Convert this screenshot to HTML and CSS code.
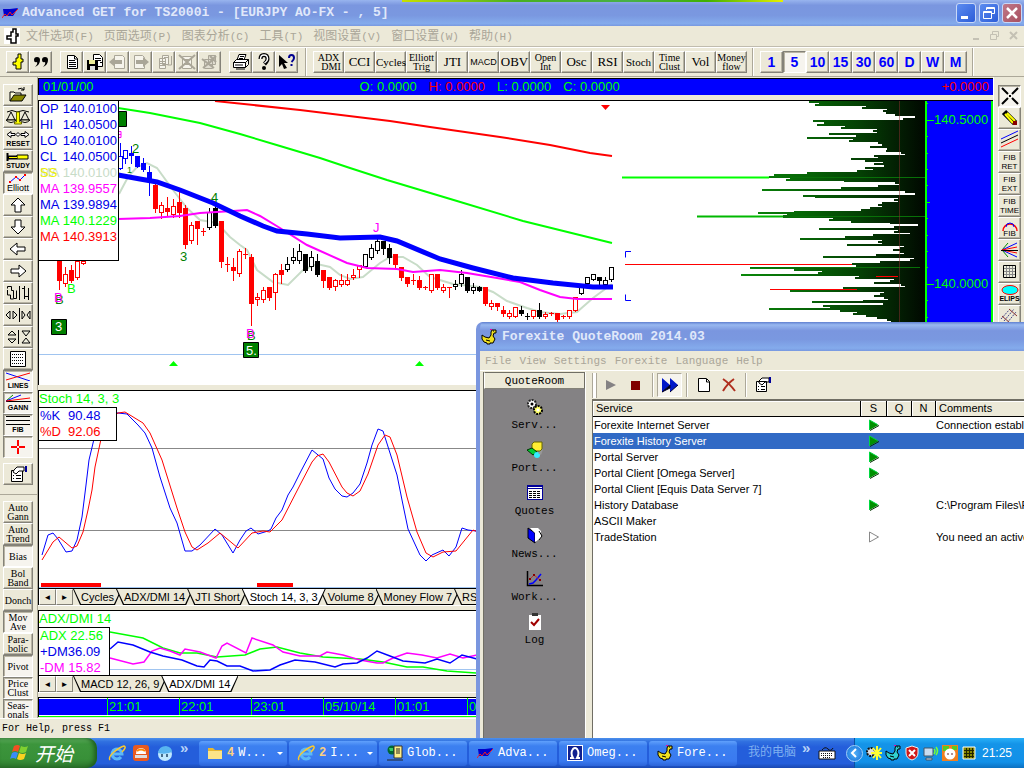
FILE: index.html
```html
<!DOCTYPE html>
<html lang="zh-CN">
<head>
<meta charset="utf-8">
<title>Advanced GET for TS2000i</title>
<link rel="stylesheet" href="styles.css">
</head>
<body>
<div class="desktop">
  <div class="top-strip"></div>
  <header class="titlebar">
    <svg class="app-icon" width="17" height="12"><path d="M1 2h7l8-1-5 8H2z" fill="#00c"/><path d="M0 11l3-4 2 2 3-4 2 3 6-6" fill="none" stroke="#f02020"/></svg>
    <h1 class="title">Advanced GET for TS2000i - [EURJPY AO-FX - , 5]</h1>
    <div class="win-buttons">
      <button class="win-btn" aria-label="Minimize"><svg width="16" height="16"><path d="M3 11h7v3H3z" fill="#fff"/></svg></button>
      <button class="win-btn" aria-label="Restore"><svg width="16" height="16"><path d="M5.500 5V2.500h8v6H11M2.500 6.500h8v7h-8zM3 7.500h7M6 3.500h7" fill="none" stroke="#fff"/></svg></button>
      <button class="win-btn close" aria-label="Close"><svg width="16" height="16"><path d="M3 3l10 10M13 3L3 13" stroke="#fff" stroke-width="2.500"/></svg></button>
    </div>
  </header>

  <nav class="menubar">
    <span class="doc-icon"><svg width="16" height="16"><path d="M9 1h3v5h2v2h-2v7H7v-4H3V8h4V4h2z" fill="#fff" stroke="#000" stroke-width="1.500"/></svg></span>
    <button class="menu">文件选项<span class="key">(F)</span></button>
    <button class="menu">页面选项<span class="key">(P)</span></button>
    <button class="menu">图表分析<span class="key">(C)</span></button>
    <button class="menu">工具<span class="key">(T)</span></button>
    <button class="menu">视图设置<span class="key">(V)</span></button>
    <button class="menu">窗口设置<span class="key">(W)</span></button>
    <button class="menu">帮助<span class="key">(H)</span></button>
    <svg class="mdi" width="50" height="12"><path d="M3 9h6" stroke="#c4c1b4" stroke-width="2"/><path d="M22.500 4V1.500h6v5H26M20.500 4.500h6v5h-6z" fill="none" stroke="#c4c1b4"/><path d="M40 2l7 7M47 2l-7 7" stroke="#c4c1b4" stroke-width="2"/></svg>
  </nav>

  <div class="toolbars">
    <div class="bar">
      <button class="tb" aria-label="Chart"><svg width="18" height="18"><path d="M9 1h3v5h2v3h-2v7H7v-4H4V9h3V5h2z" fill="#ff0" stroke="#000"/></svg></button>
      <button class="tb" aria-label="Quotes"><svg width="18" height="18"><path d="M2 7a3 3 0 1 1 6 0q0 5-5 7 3-3 2-5-3 1-3-2zM10 7a3 3 0 1 1 6 0q0 5-5 7 3-3 2-5-3 1-3-2z"/></svg></button>
    </div>
    <div class="bar">
      <button class="tb" aria-label="New"><svg width="18" height="18"><path d="M4.500 2.500h7l3 3v10h-10z" fill="#fff" stroke="#000"/><path d="M11.500 3v3h3M6 7.500h6M6 9.500h7M6 11.500h7M6 13.500h7" fill="none" stroke="#000"/></svg></button>
      <button class="tb" aria-label="Save all"><svg width="18" height="18"><path d="M7.500 1.500h6l3 3v9h-9z" fill="#fff" stroke="#000"/><path d="M9 5.500h6M9 7.500h6M14 9.500h2" stroke="#000"/><path d="M1 7h11v10H1z"/><path d="M3 7h6v4H3z" fill="#ee9"/><path d="M4 13h5v4H4z" fill="#ddd"/></svg></button>
      <button class="tb" aria-label="Previous page"><svg width="18" height="18"><path d="M5.500 2.500h8l2 2v11h-10z" fill="#f6f4ec" stroke="#aaa698"/><path d="M0 9l6-5v3h7v4H6v3z" fill="#aaa698"/></svg></button>
      <button class="tb" aria-label="Next page"><svg width="18" height="18"><path d="M2.500 2.500h8l2 2v11h-10z" fill="#f6f4ec" stroke="#aaa698"/><path d="M17 9l-6-5v3H4v4h7v3z" fill="#aaa698"/></svg></button>
      <button class="tb" aria-label="Copy page"><svg width="18" height="18"><path d="M7.500 2.500h6v9h-6zM4.500 5.500h6v10h-6z" fill="#f6f4ec" stroke="#aaa698"/><path d="M5 8.500h5M5 10.500h5M5 12.500h5M9 4.500h4M16.500 3v9h-4" fill="none" stroke="#aaa698"/></svg></button>
      <button class="tb" aria-label="Delete page"><svg width="18" height="18"><path d="M4.500 3.500h9v12h-9z" fill="#f6f4ec" stroke="#aaa698"/><path d="M1 2l16 14M17 2L1 16M6 7h6M6 11h6" stroke="#aaa698" stroke-width="2"/></svg></button>
      <button class="tb" aria-label="Clear pages"><svg width="18" height="18"><path d="M7.500 2.500h7v9h-7zM3.500 6.500h8v9h-8z" fill="#e0ddd0" stroke="#aaa698"/><path d="M1 6l12 9M13 6L2 15M9 3l6 6M15 3L9 9" stroke="#aaa698" stroke-width="2"/></svg></button>
    </div>
    <div class="bar">
      <button class="tb" aria-label="Print"><svg width="18" height="18"><path d="M5 7l2-5.500h7L12 7M1.500 9.500l3-3h12l-3 3zM1.500 9.500v5h12v-5zM13.500 14.500l3-3v-5" fill="#fff" stroke="#000"/><path d="M3 12h8M4 16h9M8 3.500h4M7 5.500h4" stroke="#000"/></svg></button>
      <button class="tb" aria-label="Help"><svg width="18" height="18"><path d="M5.500 6q0-4 3.500-4t3.500 4q0 2-3 5" fill="none" stroke="#000" stroke-width="4"/><path d="M5.500 6q0-4 3.500-4t3.500 4q0 2-3 4" fill="none" stroke="#fff" stroke-width="1.500"/><circle cx="9" cy="15" r="2"/></svg></button>
      <button class="tb" aria-label="What's this"><svg width="18" height="18"><path d="M1 2v12l3-3 2 5 3-1-3-5h4z"/><path d="M11 5q0-3 2.500-3t2.500 3q0 2-2.500 4M13.500 11v2" fill="none" stroke="#000090" stroke-width="2"/></svg></button>
    </div>
    <div class="bar sep studies">
      <button class="tb st small">ADX<br>&nbsp; DMI</button><button class="tb st">CCI</button><button class="tb st mid">Cycles</button><button class="tb st small">Elliott<br>Trig</button><button class="tb st">JTI</button><button class="tb st sans">MACD</button><button class="tb st">OBV</button><button class="tb st small">Open<br>Int</button><button class="tb st">Osc</button><button class="tb st">RSI</button><button class="tb st mid">Stoch</button><button class="tb st small">Time<br>Clust</button><button class="tb st">Vol</button><button class="tb st small">Money<br>flow</button>
    </div>
    <div class="bar sep times">
      <button class="tb tm">1</button><button class="tb tm on">5</button><button class="tb tm">10</button><button class="tb tm">15</button><button class="tb tm">30</button><button class="tb tm">60</button><button class="tb tm">D</button><button class="tb tm">W</button><button class="tb tm">M</button>
    </div>
    <div class="bar sep"></div>
  </div>

  <main class="work">
    <aside class="left-tools">
      <button class="lt" aria-label="Open"><svg width="24" height="18"><path d="M4 15V6h4l1 1h6v2" fill="#ffd" stroke="#000"/><path d="M4 15l4-6h12l-4 6z" fill="#880" stroke="#000"/><path d="M12 3q4-2 6 1m0-3v3h-3" fill="none" stroke="#000"/></svg></button>
      <button class="lt" aria-label="Balance"><svg width="26" height="18"><path d="M2 4q5-3 10 0 6-3 12 0" fill="none" stroke="#000"/><path d="M6 4L2 12h8zM20 4l-4 8h8z" fill="none" stroke="#000"/><path d="M1 12h10q-5 5-10 0zM15 12h10q-5 5-10 0z" fill="#ffd" stroke="#000"/><path d="M11.500 4h3v10h2v2h-7v-2h2z" fill="#ff0" stroke="#660"/></svg></button>
      <button class="lt stack"><svg width="24" height="9"><path d="M1 4.500l4-3v2h4v2H5v2zM23 4.500l-4-3v2h-4v2h4v2z" fill="#fff" stroke="#000"/><path d="M10 4.500l2-2 2 2-2 2z" fill="#fff" stroke="#000"/></svg><span>RESET</span></button>
      <button class="lt stack"><svg width="24" height="8"><path d="M1.500 0v8M1 3.500h10M1 5.500h10" stroke="#000" stroke-width="2"/><path d="M11 2h11v4H11z" fill="#ff0" stroke="#000"/><path d="M3 4.500h8" stroke="#ff0"/></svg><span>STUDY</span></button>
      <button class="lt stack on"><svg width="24" height="9"><path d="M4 8l6-5 4 3 5-5" fill="none" stroke="#00f"/><path d="M3 7h2v2H3zM9 2h2v2H9zM13 5h2v2h-2zM18 0h2v2h-2z" fill="#f00"/></svg><span class="big">Elliott</span></button>
      <button class="lt" aria-label="Up"><svg width="20" height="18"><path d="M10 2l7 7h-4v7H7V9H3z" fill="#fff" stroke="#000"/></svg></button>
      <button class="lt" aria-label="Down"><svg width="20" height="18"><path d="M10 16l7-7h-4V2H7v7H3z" fill="#fff" stroke="#000"/></svg></button>
      <button class="lt" aria-label="Left"><svg width="20" height="18"><path d="M2 9l7-6v4h8v4H9v4z" fill="#fff" stroke="#000"/></svg></button>
      <button class="lt" aria-label="Right"><svg width="20" height="18"><path d="M18 9l-7-6v4H3v4h8v4z" fill="#fff" stroke="#000"/></svg></button>
      <button class="lt" aria-label="Bar width"><svg width="26" height="18"><path d="M2.500 4.500V2.500h4v4h2v8h3v-8M2.500 6v5h3v4h3M14.500 2v14M19.500 2v13M23.500 4v12M17 4.500h3M19 12.500h4" fill="none" stroke="#000"/></svg></button>
      <button class="lt" aria-label="Expand horizontally"><svg width="26" height="18"><path d="M5 5L1 9l4 4zM8 5l4 4-4 4zM17 5l3 4-3 4zM25 5l-3 4 3 4z" fill="#eed" stroke="#000"/><path d="M14.500 2v14" stroke="#000"/></svg></button>
      <button class="lt" aria-label="Expand vertically"><svg width="26" height="18"><path d="M3 7l4-4 4 4zM3 11l4 4 4-4zM17 3h8l-4 5zM17 15h8l-4-5z" fill="#eed" stroke="#000"/><path d="M13.500 2v14" stroke="#000"/></svg></button>
      <button class="lt" aria-label="Grid"><svg width="18" height="18"><path d="M1.500 1.500h15v15h-15z" fill="#fff" stroke="#000"/><path d="M3 4.500h12M3 7.500h12M3 10.500h12M3 13.500h12" stroke="#000" stroke-dasharray="1 1"/></svg></button>
      <button class="lt stack on"><svg width="26" height="9"><path d="M1 1l24 8" stroke="#00f"/><path d="M1 8l24-7" stroke="#f00"/></svg><span>LINES</span></button>
      <button class="lt stack on"><svg width="26" height="9"><path d="M1 7.500h25" stroke="#000"/><path d="M1 7l7-6" stroke="#080"/><path d="M1 7l15-6" stroke="#00f"/><path d="M1 7l24-3" stroke="#f00"/></svg><span>GANN</span></button>
      <button class="lt stack on"><svg width="26" height="9"><path d="M1 .5h24M1 4.500h24M1 8.500h24" stroke="#000"/></svg><span>FIB</span></button>
      <button class="lt on" aria-label="Crosshair"><svg width="18" height="18"><path d="M9 2v6M9 10v6M2 9h6M10 9h6" stroke="#f00" stroke-width="2"/></svg></button>
      <button class="lt gap-top" aria-label="Properties"><svg width="20" height="18"><path d="M3.500 5.500h11v11h-11z" fill="#fff" stroke="#000"/><path d="M5 10.500h1M8 10.500h5M5 13.500h1M8 13.500h5M6 5l3-3h7v4h-5l-3 3-3-2z" fill="#fff" stroke="#000"/><path d="M17 1h2v6h-2z" fill="#009"/></svg></button>
      <hr class="lt-sep">
      <button class="lt txt">Auto<br>Gann</button>
      <button class="lt txt">Auto<br>Trend</button>
      <button class="lt txt on">Bias</button>
      <button class="lt txt">Bol<br>Band</button>
      <button class="lt txt">Donch</button>
      <button class="lt txt on">Mov<br>Ave</button>
      <button class="lt txt">Para-<br>bolic</button>
      <button class="lt txt on">Pivot</button>
      <button class="lt txt on">Price<br>Clust</button>
      <button class="lt txt on">Seas-<br>onals</button>
    </aside>

    <section class="charts">
      <div class="quote-bar">
        <span>01/01/00</span>
        <div class="ohlc"><span>O: 0.0000</span><span class="red">H: 0.0000</span><span>L: 0.0000</span><span>C: 0.0000</span></div>
        <span class="red change">+0.0000</span>
      </div>

      <div class="pane price">
        <table class="legend">
          <tr class="blue"><th>OP</th><td>140.0100</td></tr>
          <tr class="blue"><th>HI</th><td>140.0500</td></tr>
          <tr class="blue"><th>LO</th><td>140.0100</td></tr>
          <tr class="blue"><th>CL</th><td>140.0500</td></tr>
          <tr class="pale"><th class="double">MA<span>SS</span></th><td>140.0100</td></tr>
          <tr class="magenta"><th>MA</th><td>139.9557</td></tr>
          <tr class="blue"><th>MA</th><td>139.9894</td></tr>
          <tr class="green"><th>MA</th><td>140.1229</td></tr>
          <tr class="red"><th>MA</th><td>140.3913</td></tr>
        </table>
        <svg class="plot" id="price-plot"><g transform="translate(-39 -101)">
          <path class="ln sky" d="M39 354.500H1024"/>
          <path class="ln w2" stroke="#c8dcc8" d="M119 194 128 177 137 167 147 163 157 168 173 190 187 208 200 220 217 223 230 237 240 245 247 250 257 270 273 282 288 285 303 270 317 264 330 267 340 275 350 279 363 277 380 263 390 257 403 257 417 265 430 277 453 284 480 287 493 292 507 301 527 308 540 312 560 314 577 312 593 298 612 284"/>
          <g id="candles"></g>
          <path class="ln w2 s-magenta" d="M118 219 150 218 180 216 200 213 233 211 247 210 260 216 280 228 307 245 347 263 367 268 397 269 413 272 440 270 467 273 497 278 520 282 540 290 560 297 577 299 612 299"/>
          <path class="ln w5 s-blue" d="M118 175 140 179 157 182 180 190 213 203 240 216 263 226 277 231 307 234 340 238 380 237 397 241 440 259 473 268 513 278 553 283 593 287 613 287"/>
          <path class="ln w2 s-green" d="M118 108 150 113 200 123 240 134 280 146 320 158 350 168 387 180 457 201 523 221 612 243"/>
          <path class="ln w2 s-red" d="M215 101 300 110 390 121 430 127 500 137 550 145 590 153 612 156"/>
          <path fill="#f00" d="M601 105h9l-4.500 5z"/>
          <path fill="#0f0" d="M169 366h9l-4.500-5zM415 366h9l-4.500-5z"/>
          <g class="tag"><path d="M51.500 319.500h15v15h-15zM243.500 342.500h15v15h-15zM111.500 111.500h15v15h-15z"/></g>
          <path d="M119 131.500h2v6h-2M119 134.500h2" fill="none" stroke="#f0f"/>
          <g class="wave"><text x="55" y="331" fill="#fff">3</text><text x="246" y="355" fill="#fff">5.</text><text x="132" y="153">2</text><text x="127" y="173" font-size="9">1</text><text x="211" y="202">4</text><text x="180" y="261">3</text><text x="373" y="232" fill="#f0f">J</text><text x="247" y="340">B</text><text x="246" y="338" fill="#f0f">B</text><text x="55" y="304">B</text><text x="54" y="302" fill="#f0f">B</text><text x="67" y="293" fill="#0f0">B</text></g>
        </g></svg>
        <svg class="profile" id="profile"><defs><linearGradient id="depth" gradientUnits="userSpaceOnUse" x1="740" x2="925" y1="0" y2="0"><stop offset="0" stop-color="#0a8a0a"/><stop offset=".4" stop-color="#066006"/><stop offset=".65" stop-color="#044004"/><stop offset=".82" stop-color="#032403"/><stop offset="1" stop-color="#010801"/></linearGradient></defs>
          <g transform="translate(-620 -101)"><path class="ln sky" d="M620 354.500h305"/><g id="profile-bars" fill="url(#depth)"></g>
          <path d="M622 177.500h147" stroke="#0f0" stroke-width="2"/><path d="M697 216.500h86" stroke="#00b800" stroke-width="2"/><path d="M769 177.500h156M783 216.500h142M750 267.500h170" stroke="#087008"/>
          <path class="ln s-red" d="M625 264.500h227M876 276.500h22M770 289.500h87"/><path d="M899.500 101v284" stroke="#8a3030" stroke-opacity=".5"/>
          <path class="ln s-blue" d="M631 251.500h-5.500v6M631 300.500h-5.500v-6"/></g></svg>
        <div class="axis"><svg width="7" height="285"><path d="M0 19.500h7M0 183.500h7M0 101.500h3M0 2.500h1M0 35.500h1M0 52.500h1M0 68.500h1M0 84.500h1M0 117.500h1M0 134.500h1M0 150.500h1M0 166.500h1M0 199.500h1M0 216.500h1" stroke="#0f0"/></svg>
          <div class="axis-labels"><span>140.5000</span><span>140.0000</span></div></div>
      </div>

      <div class="pane stoch">
        <div class="over"><p class="green">Stoch 14, 3, 3</p>
        <table class="legend k"><tr class="blue"><th>%K</th><td>90.48</td></tr><tr class="red"><th>%D</th><td>92.06</td></tr></table></div>
        <svg class="plot"><g transform="translate(-39 -391)">
          <path class="ln" stroke="#888" d="M39 448.500H1024M39 530.500H1024"/><path class="ln sky" d="M39 587.500H1024"/>
          <path fill="#f00" d="M41 583h60v4H41zM257 583h36v4h-36z"/>
          <path class="ln s-blue" d="M42 555 48 535 53 533 58 539 66 552 72 551 77 540 82 517 86 485 89 460 94 439 101 420 110 412 118 413 127 414 138 425 145 433 152 448 160 477 170 508 177 523 185 551 192 551 200 545 215 529 222 535 233 553 240 540 246 531 251 528 258 534 268 531 271 529 276 518 282 510 288 495 293 487 300 473 312 450 323 459 329 478 335 489 342 496 347 497 353 493 360 484 367 463 372 445 378 429 383 431 390 453 397 475 402 500 408 529 420 555 426 561 432 555 443 550 449 556 456 547 462 528 468 530 476 531"/>
          <path class="ln s-red" d="M42 560 53 542 59 537 72 548 77 546 83 532 88 510 92 490 95 467 101 439 108 420 118 413 125 412 143 423 150 433 162 460 177 508 185 532 192 547 197 550 208 543 220 533 238 548 252 533 263 531 270 532 282 520 300 485 312 462 317 456 323 454 329 462 342 487 347 493 353 496 360 491 368 474 378 445 385 435 390 437 397 455 407 497 417 532 426 553 433 557 443 552 456 551 473 530 478 532"/>
        </g></svg>
      </div>
      <div class="tabs"><button class="arrow" aria-label="Previous">◄</button><button class="arrow" aria-label="Next">►</button>
        <button class="tab">Cycles</button><button class="tab">ADX/DMI 14</button><button class="tab">JTI Short</button><button class="tab active">Stoch 14, 3, 3</button><button class="tab">Volume 8</button><button class="tab">Money Flow 7</button><button class="tab">RSI 5</button></div>

      <div class="pane adx">
        <div class="over"><p class="green">ADX/DMI 14</p>
        <ul class="legend a"><li class="green">ADX 22.56</li><li class="blue">+DM36.09</li><li class="magenta">-DM 15.82</li></ul></div>
        <svg class="plot"><g transform="translate(-39 -611)">
          <path class="ln sky" d="M39 669.500H1024"/>
          <path class="ln s-green" stroke-width="1.500" d="M110 632 143 638 163 648 180 653 197 653 217 657 245 655 260 649 277 647 300 653 323 657 360 659 383 662 407 667 423 667 447 671 476 673"/>
          <path class="ln s-magenta" stroke-width="1.500" d="M110 658 133 664 144 662 152 651 160 648 170 651 180 655 185 649 200 652 216 658 222 646 227 643 246 653 252 638 273 645 283 652 300 656 320 656 327 652 343 655 360 660 377 663 383 663 393 658 407 653 422 655 437 658 450 654 463 658 477 655"/>
          <path class="ln s-blue" stroke-width="1.500" d="M110 649 118 642 133 645 150 652 163 656 182 660 197 666 204 667 210 660 217 661 227 666 240 666 253 671 270 670 280 665 295 660 315 662 335 667 343 664 357 663 367 658 377 651 390 656 403 661 425 663 437 659 450 663 462 655 477 659"/>
        </g></svg>
      </div>
      <div class="tabs"><button class="arrow" aria-label="Previous">◄</button><button class="arrow" aria-label="Next">►</button>
        <button class="tab">MACD 12, 26, 9</button><button class="tab active">ADX/DMI 14</button></div>
      <div class="timeline"><span>21:01</span><span>22:01</span><span>23:01</span><span>05/10/14</span><span>01:01</span><span>02:01</span></div>
    </section>

    <aside class="right-tools">
      <button class="rt on" aria-label="Clear"><svg width="20" height="20"><path d="M2 2l6 6M12 12l6 6M18 2l-6 6M8 12l-6 6" stroke="#000" stroke-width="2"/><path d="M9 9h2v2H9z"/></svg></button>
      <button class="rt" aria-label="Pencil"><svg width="20" height="20"><path d="M4 4l11 11" stroke="#000" stroke-width="6"/><path d="M5 6l8 9M7 5l8 8" stroke="#ff0" stroke-width="2"/><path d="M13 13h4v4h-4z" fill="#800"/></svg></button>
      <button class="rt" aria-label="Trend lines"><svg width="20" height="20"><path d="M1 9l17-8" stroke="#00f"/><path d="M1 13l17-8" stroke="#000"/><path d="M1 17l17-8" stroke="#f00"/></svg></button>
      <button class="rt txt">FIB<br>RET</button>
      <button class="rt txt">FIB<br>EXT</button>
      <button class="rt txt">FIB<br>TIME</button>
      <button class="rt txt fibarc"><svg width="18" height="12"><path d="M2 12a7 7 0 1 1 14 0" fill="none" stroke="#f00" stroke-width="1.500"/><path d="M5 8a4 4 0 0 1 8 0" fill="none" stroke="#00f"/></svg><span>FIB</span></button>
      <button class="rt" aria-label="Fan"><svg width="20" height="20"><path d="M2 10l6-7" stroke="#080"/><path d="M2 10l15-7M2 10l15 7" stroke="#00f"/><path d="M2 10l15-3M2 10l15 3" stroke="#f00"/><path d="M2 10l6 7" stroke="#080"/><path d="M1 10.500h17" stroke="#000"/></svg></button>
      <button class="rt" aria-label="Grid tool"><svg width="20" height="20"><path d="M3.500 3.500h12v12h-12z" fill="#eed" stroke="#000"/><path d="M6.500 4v11M9.500 4v11M12.500 4v11M4 6.500h11M4 9.500h11M4 12.500h11" stroke="#888"/></svg></button>
      <button class="rt stack"><svg width="18" height="10"><ellipse cx="9" cy="5" rx="8" ry="4.500" fill="#0ff" stroke="#f00"/></svg><span>ELIPS</span></button>
      <button class="rt" aria-label="Pitchfork"><svg width="20" height="20"><path d="M1 13l9-10M4 15l10-12M7 17l9-11" stroke="#448" stroke-dasharray="2 1"/><path d="M2 10l8 7M9 3l8 7" stroke="#833"/></svg></button>
    </aside>
  </main>

  <footer class="status">For Help, press F1</footer>

  <section class="qr">
    <header class="qr-title"><svg width="16" height="16"><use href="#dino"/></svg><h2 class="title">Forexite QuoteRoom 2014.03</h2></header>
    <div class="qr-body">
      <nav class="qr-menu"><button>File</button><button>View</button><button>Settings</button><button>Forexite</button><button>Language</button><button>Help</button></nav>
      <div class="qr-main">
        <nav class="qr-side">
          <h3>QuoteRoom</h3>
          <button><svg width="18" height="18"><circle cx="6" cy="6" r="4" fill="#fff" stroke="#222" stroke-width="2" stroke-dasharray="2 1"/><circle cx="6" cy="6" r="1.500"/><circle cx="12" cy="12" r="4" fill="#ff6" stroke="#000" stroke-width="2" stroke-dasharray="2 1"/><circle cx="12" cy="12" r="1.500" fill="#fff"/></svg>Serv...</button>
          <button><svg width="18" height="18"><path d="M6 3l2-2h8v7l-2 2H6z" fill="#fe3" stroke="#660"/><path d="M1 9l5-2 5 4-4 3z" fill="#0c3" stroke="#030"/><circle cx="11" cy="14" r="3" fill="#3ef"/><path d="M12 12l5-4-2 6z" fill="#999"/></svg>Port...</button>
          <button><svg width="18" height="18"><path d="M1 1h16v15H1z" fill="#009"/><path d="M2 5h14v10H2z" fill="#fff"/><path d="M3 7.500h12M3 9.500h12M3 11.500h12M3 13.500h12" stroke="#000" stroke-dasharray="3 1"/><path d="M2 3.500h14" stroke="#fff"/></svg>Quotes</button>
          <button><svg width="18" height="18"><path d="M2 1l7 5v10l-7-5z" fill="#00f" stroke="#000"/><path d="M4 1h8l3 3v7l-6 4V6z" fill="#fff"/><path d="M13 4l3 5-3 4" fill="none" stroke="#000"/></svg>News...</button>
          <button><svg width="18" height="18"><path d="M1.500 1v14.500H17" fill="none" stroke="#000" stroke-width="1.500"/><path d="M3 14l4-1 3-3 5-6" fill="none" stroke="#00f" stroke-width="1.500"/><path d="M4 9l4-4 6 5" fill="none" stroke="#c03030"/><path d="M3 8h2v2H3zM7 4h2v2H7zM13 9h2v2h-2z" fill="#800"/></svg>Work...</button>
          <button><svg width="18" height="18"><path d="M3 2h12v15H3z" fill="#fff"/><path d="M6 0h6v3H6z" fill="#333"/><path d="M5 9l3 3 5-6" fill="none" stroke="#a00000" stroke-width="2"/></svg>Log</button>
        </nav>
        <div class="qr-content">
          <div class="qr-tools">
            <i class="grip"></i>
            <button aria-label="Start"><svg width="12" height="12"><path d="M1 1l10 5-10 5z" fill="#848284"/></svg></button>
            <button aria-label="Stop"><svg width="12" height="12"><path d="M1 2h9v9H1z" fill="#800000"/></svg></button>
            <i class="div"></i>
            <button class="on" aria-label="Start all"><svg width="18" height="18"><path d="M1 2l8 7-8 7zM9 2l8 7-8 7z" fill="#0018c8"/><path d="M1 16l8-7v3zM9 16l8-7" stroke="#003"/></svg></button>
            <i class="div"></i>
            <button aria-label="New"><svg width="16" height="16"><path d="M2.500 1.500h8l3 3v10h-11z" fill="#fff" stroke="#000"/><path d="M10.500 2v3h3" fill="none" stroke="#000"/></svg></button>
            <button aria-label="Delete"><svg width="16" height="16"><path d="M2 2q6 4 12 12M13 2Q6 7 2 14" fill="none" stroke="#b03020" stroke-width="2"/></svg></button>
            <i class="div"></i>
            <button aria-label="Properties"><svg width="18" height="16"><path d="M2.500 4.500h10v10h-10zM5 4l3-3h7v4h-4l-3 3-3-2z" fill="#fff" stroke="#000"/><path d="M4 9.500h1M7 9.500h4M4 12.500h1M7 12.500h4" stroke="#000"/><path d="M15 0h2v6h-2z" fill="#009"/></svg></button>
          </div>
          <table class="services">
            <thead><tr><th>Service</th><th class="c">S</th><th class="c">Q</th><th class="c">N</th><th>Comments</th></tr></thead>
            <tbody>
              <tr><td>Forexite Internet Server</td><td><svg width="12" height="12"><use href="#run"/></svg></td><td></td><td></td><td>Connection established</td></tr>
              <tr class="sel"><td>Forexite History Server</td><td><svg width="12" height="12"><use href="#run"/></svg></td><td></td><td></td><td></td></tr>
              <tr><td>Portal Server</td><td><svg width="12" height="12"><use href="#run"/></svg></td><td></td><td></td><td></td></tr>
              <tr><td>Portal Client [Omega Server]</td><td><svg width="12" height="12"><use href="#run"/></svg></td><td></td><td></td><td></td></tr>
              <tr><td>Portal Client [Equis Data Server 7]</td><td></td><td></td><td></td><td></td></tr>
              <tr><td>History Database</td><td><svg width="12" height="12"><use href="#run"/></svg></td><td></td><td></td><td>C:\Program Files\Forexite</td></tr>
              <tr><td>ASCII Maker</td><td></td><td></td><td></td><td></td></tr>
              <tr><td>TradeStation</td><td><svg width="12" height="12"><path d="M1.500 1v10l9-5z" fill="#fff" stroke="#888"/></svg></td><td></td><td></td><td>You need an active license</td></tr>
            </tbody>
          </table>
        </div>
      </div>
    </div>
  </section>

  <footer class="taskbar">
    <button class="start"><svg width="22" height="20"><path d="M5 3q4-2 6 0L9 9Q6 7 3 9z" fill="#f25022"/><path d="M12 3q4 2 7 0l-2 6q-4 2-7 0z" fill="#7fd030"/><path d="M3 10q3-2 6 0l-2 6q-3-2-6 0z" fill="#3a8cf8"/><path d="M10 10q4 2 7 0l-2 6q-4 2-7 0z" fill="#fbd220"/></svg><span>开始</span></button>
    <div class="quick">
      <svg width="18" height="18"><use href="#ie"/></svg>
      <svg width="18" height="18"><rect x="1" y="1" width="16" height="16" rx="3" fill="#e85a20"/><path d="M4 10q0-6 5-6t5 6z" fill="#fff"/><path d="M3 11h12v3H3z" fill="#ddd"/><path d="M5 7q4-3 8 0" fill="none" stroke="#f80" stroke-width="2"/></svg>
      <svg width="18" height="18"><circle cx="9" cy="10" r="7" fill="#bfe8ff"/><path d="M2 9q1-7 8-7 6 1 6 6-7 3-14 1z" fill="#58b4f0"/><path d="M6 10v3M11 10v3" stroke="#246" stroke-width="1.500"/></svg>
      <span class="more">»</span>
    </div>
    <div class="tasks">
      <button class="task"><svg width="16" height="16"><path d="M1 3h5l2 2h7v9H1z" fill="#e8b830"/><path d="M1 6h14v8H1z" fill="#fce488"/></svg><b>4</b><span>W...</span><i class="caret"></i></button>
      <button class="task"><svg width="18" height="18"><use href="#ie"/></svg><b>2</b><span>I...</span><i class="caret"></i></button>
      <button class="task"><svg width="16" height="16"><circle cx="5" cy="5" r="4.500" fill="#063"/><path d="M2 3h4v3H3z" fill="#3c6"/><path d="M7 1h8v12H7z" fill="#fe8" stroke="#333"/><path d="M9 4h4M9 6h4M9 8h4M0 15h16" stroke="#222"/></svg>Glob...</button>
      <button class="task"><svg width="17" height="14"><path d="M1 3h7l8-1-5 8H2z" fill="#00c"/><path d="M0 12l3-4 2 2 3-4 2 3 6-6" fill="none" stroke="#f02020"/></svg>Adva...</button>
      <button class="task"><svg width="16" height="16"><path d="M0 0h16v16H0z" fill="#fff"/><path d="M1 1h14v14H1z" fill="#102090"/><path d="M3 13h3q-3-5 0-9 2-2 4 0 3 4 0 9h3" fill="none" stroke="#fff" stroke-width="2"/></svg>Omeg...</button>
      <button class="task"><svg width="16" height="16"><use href="#dino"/></svg>Fore...</button>
    </div>
    <span class="pc">我的电脑</span><span class="more">»</span>
    <svg class="kbd" width="18" height="16"><path d="M4 5q3-4 6-1t5-1" fill="none" stroke="#111"/><path d="M1 6h16v8H1z" fill="#fff" stroke="#111"/><path d="M3 8.500h12M3 10.500h12M5 12.500h8" stroke="#111" stroke-dasharray="1 1"/></svg>
    <div class="tray">
      <button class="chev" aria-label="Show hidden icons"><svg width="8" height="10"><path d="M6 1L2 5l4 4" fill="none" stroke="#fff" stroke-width="2"/></svg></button>
      <svg width="16" height="16"><circle cx="5" cy="7" r="4" fill="#ddd" stroke="#111" stroke-width="2" stroke-dasharray="2 1"/><path d="M11 1v14M5 8h11M7 3l8 10M15 3L7 13" stroke="#ff3" stroke-width="2"/></svg>
      <svg width="16" height="16" class="cyan"><use href="#dino"/></svg>
      <svg width="16" height="16"><path d="M8 1l6 2v5q0 5-6 7-6-2-6-7V3z" fill="#d01818" stroke="#eee"/><path d="M5 5l6 6M11 5l-6 6" stroke="#fff" stroke-width="2"/></svg>
      <svg width="16" height="16"><path d="M1 3h9v8H1zM3 13h6v2H3z" fill="#c8dcf0" stroke="#456"/><path d="M11 4q2 2 0 5M13 2q3 4 0 8" fill="none" stroke="#7f3" stroke-width="1.500"/></svg>
      <svg width="16" height="16"><path d="M0 0h16v16H0z" fill="#f08020"/><path d="M1 1h6v5H1zM10 1h5v4h-5z" fill="#5c2"/><circle cx="8" cy="9" r="5.500" fill="#fff"/><path d="M6 8v2M10 8v2" stroke="#622"/></svg>
      <svg width="16" height="16"><path d="M2 2h12v12H2z" fill="#880" stroke="#fff"/><path d="M3 5.500h10M3 8.500h10M3 11.500h10M5.500 3v10M8.500 3v10M11.500 3v10" stroke="#220"/></svg>
      <time>21:25</time>
    </div>
  </footer>

  <svg class="defs" width="0" height="0">
    <symbol id="dino" viewBox="0 0 16 16"><path d="M11 1h4v3h-2l-1 3 2 3-2 4H9v1H6v-1l-3-1-2-3V6l3 2 4 1 2-3V3z" fill="currentColor" stroke="#000"/><path d="M5 11l4 1M12 2h1" stroke="#000"/><path d="M9 0h2v1H9z" fill="#e0a"/></symbol>
    <symbol id="run" viewBox="0 0 12 12"><path d="M1.500 1v10l9-5z" fill="#009000"/><path d="M1.500 11V1l8 4.500" fill="none" stroke="#00d840"/><path d="M2 11.500l9-5" stroke="#030"/></symbol>
    <symbol id="ie" viewBox="0 0 18 18"><path d="M4 10h10a5 5 0 1 0-1 3" fill="none" stroke="#5cb8f8" stroke-width="3"/><path d="M2 16q-2-3 4-8t10-6q3 1-2 6" fill="none" stroke="#f8c830" stroke-width="1.500"/></symbol>
  </svg>
</div>
<script src="charts.js"></script>
</body>
</html>
```

FILE: styles.css
```css
* { box-sizing: border-box; }
body { margin: 0; font-family: "Liberation Sans", "Noto Sans CJK SC", sans-serif; font-size: 13px; color: #000; }
button { margin: 0; padding: 0; border: 0; background: none; font: inherit; color: inherit; }
h1, h2, h3, p, ul { margin: 0; padding: 0; }
svg { display: block; flex: none; }

.desktop { position: relative; height: 100vh; display: flex; flex-direction: column; overflow: hidden; background: #ece9d8; }
.top-strip { position: absolute; z-index: 3; top: 0; left: 402px; right: 241px; height: 2px; background: linear-gradient(90deg, #c8e000, #48b020 30%, #48b048 60%, #40b000 80%, #e8f000); }

.titlebar { flex: none; height: 26px; display: flex; align-items: center; gap: 3px; padding: 0 2px; background: linear-gradient(#98b4ee, #7a96df 20%, #7a98e0 60%, #84abec 90%, #7898e0); }
.title { flex: 1; font: bold 13px/16px "Liberation Mono", monospace; color: #e0e8fa; white-space: pre; }
.win-buttons { display: flex; gap: 3px; }
.win-btn { width: 20px; height: 20px; display: grid; place-items: center; border: 1px solid #c8d8f8; border-radius: 3px; background: linear-gradient(135deg, #5c8cf0, #2c5cd8); }
.win-btn.close { background: linear-gradient(135deg, #c07888, #a85060); }

.menubar { flex: none; height: 21px; display: flex; align-items: center; gap: 10px; padding: 0 4px; color: #aaa698; font-size: 12px; line-height: 18px; border-bottom: 1px solid #c0bcae; }
.doc-icon { background: #fff; margin: 0 -4px 0 0; }
.menu { white-space: nowrap; font-family: "Noto Sans CJK SC", sans-serif; }
.key { font-family: "Liberation Mono", monospace; font-size: 11px; }
.mdi { margin-left: auto; }

.toolbars { flex: none; height: 30px; display: flex; align-items: flex-start; padding-left: 6px; border-top: 1px solid #fff; border-bottom: 1px solid #aca899; }
.bar { display: flex; padding-top: 3px; margin-right: 8px; height: 28px; }
.bar.sep { border-left: 1px solid #aca899; box-shadow: inset 1px 0 #fff; padding-left: 7px; margin-right: 6px; margin-left: -1px; }
.tb { width: 23px; height: 22px; display: grid; place-items: center; border: 1px solid; border-color: #fff #848278 #848278 #fff; box-shadow: inset -1px -1px #b8b4a4; background: #ece9d8; font-family: "Liberation Serif", serif; white-space: nowrap; }
.tb.st { width: 31px; font-size: 13px; line-height: 14px; }
.tb.st.small { font-size: 10px; line-height: 9px; text-align: center; }
.tb.st.mid { font-size: 11px; }
.tb.st.sans { font: 9px/12px "Liberation Sans", sans-serif; }
.tb.tm { font: bold 14px/16px "Liberation Sans", sans-serif; color: #00f; }
.tb.on, .lt.on, .rt.on { border-color: #848278 #fff #fff #848278; box-shadow: inset 1px 1px #b8b4a4; background: #f6f4ee; }

.work { flex: 1; min-height: 0; display: flex; overflow: hidden; }
.left-tools { flex: none; width: 38px; display: flex; flex-direction: column; padding: 7px 4px 0 3px; border-right: 1px solid #aca899; }
.lt { flex: none; height: 22px; display: grid; place-items: center; border: 1px solid; border-color: #fff #848278 #848278 #fff; box-shadow: inset -1px -1px #b8b4a4; background: #ece9d8; }
.stack { display: flex; flex-direction: column; align-items: center; justify-content: center; gap: 1px; font: bold 7px/8px "Liberation Sans", sans-serif; }
.big { font-size: 9px; font-weight: normal; }
.lt.txt { font: 10px/9px "Liberation Serif", serif; text-align: center; }
.gap-top { margin-top: 5px; }
.lt-sep { width: 38px; height: 2px; margin: 9px 0 6px -3px; border: 0; border-top: 1px solid #aca899; background: #fff; }

.right-tools { flex: none; width: 31px; display: flex; flex-direction: column; padding: 8px 3px 0 4px; border-left: 1px solid #fff; }
.rt { flex: none; height: 22px; display: grid; place-items: center; border: 1px solid; border-color: #fff #848278 #848278 #fff; box-shadow: inset -1px -1px #b8b4a4; background: #ece9d8; }
.rt.stack { display: flex; gap: 0; }
.rt.txt { font: 8px/9px "Liberation Sans", sans-serif; text-align: center; }
.rt.fibarc { display: flex; flex-direction: column; align-items: center; justify-content: center; }
.fibarc span { margin-top: -2px; }

.charts { flex: 1; min-width: 0; padding-top: 1px; }
.quote-bar { display: grid; grid-template-columns: 6fr auto 7fr; height: 17px; padding: 0 4px; border-top: 1px solid #000; border-left: 1px solid #000; background: #00f; color: #0f0; line-height: 16px; margin-bottom: 5px; }
.quote-bar .ohlc { display: flex; gap: 12px; }
.quote-bar .change { text-align: right; }
.red, .quote-bar .red { color: #f00; }
.blue { color: #0000e8; }
.green { color: #0f0; }
.magenta { color: #f0f; }
.pale { color: #c8dcc8; }
.double { position: relative; }
.double span { position: absolute; left: 0; top: 0; color: #f0f000; }

.pane { display: flex; position: relative; background: #fff; border-top: 1px solid #000; border-left: 1px solid #000; line-height: 16px; overflow: hidden; }
.price { height: 285px; margin-bottom: 5px; }
.stoch { height: 198px; }
.adx { height: 65px; }
.plot { flex: 1; min-width: 0; height: 100%; }
.profile { width: 305px; height: 100%; }
.legend { position: absolute; z-index: 1; top: 0; left: 0; width: 80px; height: 160px; background: #fff; border: solid #000; border-width: 0 1px 1px 0; border-spacing: 0; list-style: none; padding: 0 1px; }
.price .legend { display: flex; }
.legend th { width: 23px; padding: 0; text-align: left; font-weight: normal; }
.legend td { padding: 0; }
.legend tr { height: 16px; }
.legend tr, .legend td, .legend th { line-height: 16px; }
.over { position: absolute; z-index: 1; top: 0; left: 0; white-space: nowrap; }
.legend.k, .legend.a { position: static; width: 78px; height: auto; border-width: 1px 1px 1px 0; }
.legend.k th { width: 28px; }
.legend.a { width: 71px; }

.ln { fill: none; }
.sky { stroke: #a0c4f0; }
.w2 { stroke-width: 2; }
.w5 { stroke-width: 5; }
.s-blue { stroke: #00f; }
.s-red { stroke: #f00; }
.s-green { stroke: #0f0; }
.s-magenta { stroke: #f0f; }
.tag { fill: #008000; stroke: #000; }
.wave { fill: #008000; font-size: 13px; }

.axis { flex: none; width: 68px; display: flex; background: #00f; border: solid #0f0; border-width: 0 2px; }
.axis-labels { display: flex; flex-direction: column; gap: 148px; padding-top: 11px; color: #0f0; }

.tabs { display: flex; height: 17px; margin-bottom: 5px; border-left: 1px solid #000; border-top: 1px solid #000; box-shadow: 0 1px #fff; font-size: 11px; }
.arrow { width: 17px; font-size: 8px; border: 1px solid; border-color: #fff #848278 #848278 #fff; }
.arrow + .tab { margin-left: 0; }
.tab { position: relative; height: 16px; margin-left: -6px; padding: 0 8px 0 8px; line-height: 15px; white-space: nowrap; background: #000; clip-path: polygon(0 0, 100% 0, calc(100% - 7px) 100%, 7px 100%); z-index: 0; }
.tab::before { content: ""; position: absolute; z-index: -1; inset: 0 0 1px; background: #ece9d8; clip-path: polygon(1px 0, calc(100% - 1px) 0, calc(100% - 8px) 100%, 8px 100%); }
.tab.active { z-index: 1; }
.tab.active::before { background: #fff; }

.timeline { display: flex; height: 20px; padding-left: 68px; border: solid #000; border-width: 1px 0 0 1px; background: linear-gradient(#fff 1px, #00f 1px 17px, #fff 17px 18px, #0f0 18px); color: #0f0; line-height: 18px; }
.timeline span { flex: none; width: 72px; height: 17px; padding-left: 1px; border-left: 1px solid #0f0; }

.status { flex: none; height: 20px; margin-bottom: 30px; padding-left: 2px; border-top: 1px solid #fff; font: 10px/20px "Liberation Mono", monospace; }

.qr { position: absolute; z-index: 2; left: 476px; top: 322px; right: 0; bottom: 30px; display: flex; flex-direction: column; border-left: 4px solid #7a96df; border-radius: 7px 0 0 0; background: #7a96df; overflow: hidden; }
.qr-title { flex: none; height: 29px; display: flex; align-items: center; gap: 5px; padding-left: 1px; color: #f0e020; background: linear-gradient(#6080d0, #98b8f0 10%, #7a96df 30%, #7a98e0 60%, #84abec 90%, #7898e0); }
.qr-body { flex: 1; min-height: 0; display: flex; flex-direction: column; background: #ece9d8; }
.qr-menu { display: flex; gap: 8px; height: 20px; padding-left: 5px; align-items: center; font: 11px/18px "Liberation Mono", monospace; color: #aaa698; border-bottom: 1px solid #fff; }
.qr-main { flex: 1; min-height: 0; display: flex; gap: 6px; padding-left: 3px; }
.qr-side { flex: none; width: 103px; display: flex; flex-direction: column; margin-top: 1px; background: #848284; border-left: 1px solid #706e64; border-right: 1px solid #fff; font: 11px/12px "Liberation Mono", monospace; }
.qr-side h3 { height: 17px; margin-bottom: 9px; background: #ece9d8; border: 1px solid; border-color: #706e64 #706e64 #848278 #fff; text-align: center; font: inherit; line-height: 16px; }
.qr-side button { height: 43px; display: flex; flex-direction: column; align-items: center; gap: 3px; }
.qr-content { flex: 1; min-width: 0; display: flex; flex-direction: column; }
.qr-tools { display: flex; align-items: center; height: 28px; }
.grip { width: 5px; height: 25px; border: solid #aca899; border-width: 0 1px; background: #fff; margin-right: 1px; }
.qr-tools button { width: 25px; height: 24px; display: grid; place-items: center; }
.qr-tools button.on { border: 1px solid; border-color: #aca899 #fff #fff #aca899; background: #f6f4ee; }
.div { width: 2px; height: 24px; margin: 0 3px 0 4px; border-left: 1px solid #aca899; background: #fff; }
.services { flex: 1; width: 100%; border-left: 1px solid #706e64; border-top: 2px solid #706e64; display: block; background: #fff; font-size: 11px; line-height: 14px; border-spacing: 0; overflow: hidden; }
.services thead, .services tbody { display: block; }
.services tr { display: grid; grid-template-columns: 268px 26px 25px 24px 1fr; height: 16px; }
.services th { font-weight: normal; text-align: left; padding: 0 3px; background: #ece9d8; border-right: 1px solid #000; border-bottom: 1px solid #000; box-shadow: inset 1px 1px #fff; }
.services th:last-child { border-right: 0; }
.services .c { text-align: center; }
.services td { padding: 1px; white-space: nowrap; overflow: hidden; display: block; }
.services td:last-child { padding-left: 0; }
.services td svg { margin: 1px 0 0 6px; }
.sel { background: #316ac5; color: #fff; }

.taskbar { position: absolute; z-index: 4; left: 0; right: 0; bottom: 0; height: 30px; display: flex; align-items: center; background: linear-gradient(#4c90ec, #3070e0 12%, #245edb 30%, #245edb 85%, #1a48b0); color: #fff; font: 12px/16px "Liberation Mono", "Noto Sans CJK SC", monospace; }
.start { flex: none; width: 97px; height: 30px; display: flex; align-items: center; gap: 4px; padding-left: 9px; border-radius: 0 10px 10px 0; background: linear-gradient(#60b060, #3c953c 20%, #389038 70%, #2c742c); box-shadow: inset -3px 0 4px #1e5e1e; font: italic 19px/24px "Noto Sans CJK SC", sans-serif; }
.quick { flex: none; align-self: stretch; display: flex; align-items: center; gap: 6px; width: 102px; padding-left: 11px; }
.more { font: bold 15px/16px "Liberation Sans", sans-serif; color: #b8d4f8; align-self: flex-start; margin: 2px 0 0 6px; }
.quick .more { margin-left: 0; }
.tasks { flex: none; display: flex; gap: 2px; }
.task { width: 88px; height: 25px; display: flex; align-items: center; gap: 4px; padding: 0 4px 0 8px; border-radius: 3px; background: linear-gradient(#60a0fc, #3c80f0 20%, #3a7af0 80%, #2c64d8); color: #fff; white-space: nowrap; }
.task svg { color: #f0e020; }
.task b { color: #fcd080; }
.caret { margin-left: auto; border: 3px solid transparent; border-top-color: #fff; border-bottom: 0; }
.pc { margin-left: 11px; color: #7fb0f0; }
.kbd { margin-left: 8px; }
.tray { align-self: stretch; margin-left: auto; display: flex; align-items: center; gap: 3px; padding: 0 12px 0 0; background: linear-gradient(#28b0f8, #1494e8 20%, #1290e8 80%, #0c70c0); border-left: 1px solid #0c50a0; }
.chev { width: 17px; height: 17px; margin-left: -9px; display: grid; place-items: center; border-radius: 50%; background: radial-gradient(#50b0f8, #1470d8); border: 1px solid #a0d0f8; }
.cyan { color: #30d0d0; }
.tray time { margin-left: 2px; font: 12px/16px "Liberation Sans", sans-serif; }
.defs { position: absolute; }
```

FILE: charts.js
```js
const NS = "http://www.w3.org/2000/svg";
function add(parent, name, attrs) {
  const el = document.createElementNS(NS, name);
  for (const key in attrs) el.setAttribute(key, attrs[key]);
  parent.appendChild(el);
}

// Each candle: centre x, high, body top, body bottom, low, kind + colour.
// Kinds: f = filled, h = hollow, c = cross.
const candles = `120 143 156 169 169 hb|125 150 150 159 163 hb|131 146 153 156 163 fb|137 156 156 167 167 fb|143 158 163 170 171 fb|149 166 172 179 195 fb
155 182 185 209 212 fr|161 202 205 213 218 hr|167 197 208 212 216 fr|173 199 206 215 217 hr|179 192 202 213 217 fr|185 205 208 245 248 fr|191 222 225 241 243 hr|197 221 221 229 244 fr|203 228 231 231 235 cr|209 208 212 228 229 hk|215 203 208 226 227 fk
221 221 221 262 267 fr|227 257 264 264 271 cr|233 258 267 271 280 fr|239 249 251 274 276 hr|59 261 261 281 289 fr|65 267 274 284 286 hr|71 265 270 281 282 fr|77 261 261 278 279 hr|83 261 261 264 264 hr
245 248 254 254 258 cr|251 254 257 304 325 fr|257 293 297 300 305 hr|263 287 290 300 302 hr|269 287 287 298 300 fr|275 273 274 293 309 hr|281 264 270 275 283 fr|287 257 264 270 271 hk|293 248 257 261 263 hk|299 244 251 261 263 hk|305 254 254 271 272 fk|311 251 257 267 270 hk|317 254 261 275 276 fk
323 270 270 281 287 fr|329 277 277 288 289 fr|335 279 280 287 290 hr|341 274 280 285 286 hr|347 274 280 285 285 hr|353 269 275 277 279 hr|359 265 265 270 277 hr|365 254 254 267 267 hk|371 244 248 258 259 hk|377 235 241 251 253 hk|383 241 241 249 254 fk|389 244 248 258 263 fk
395 254 254 265 267 fr|401 267 267 278 280 fr|407 277 277 284 286 fr|413 274 280 280 284 cr|419 276 280 288 289 fr|425 286 287 287 289 cr|431 274 274 291 292 hr|437 274 274 288 289 fr|443 284 287 291 292 hr|449 287 287 287 297 cr|455 280 284 287 289 hk|461 270 274 284 286 hk|467 277 277 291 292 fk|473 283 287 291 293 hk|479 286 287 291 291 fk
485 287 287 304 305 fr|491 300 303 307 309 hr|497 303 303 307 310 fr|503 306 310 314 316 fr|509 310 313 317 318 hr|515 307 307 317 317 hr|521 306 310 314 315 fk|527 313 316 316 319 ck|533 310 310 317 318 hr|539 303 310 317 318 fk|545 312 314 317 318 hr|551 312 313 313 315 cr|557 313 313 320 321 fr|563 315 316 316 318 cr|569 310 310 317 318 hr|575 297 297 311 311 hr
581 285 287 294 294 hk|587 277 277 284 285 hk|593 274 274 280 280 hk|599 277 277 281 284 fk|605 277 280 285 285 hk|611 267 267 280 281 hk`.split(/[|\n]/);

const palette = { r: "#f00", b: "#00f", k: "#000" };
const candleLayer = document.getElementById("candles");
for (const row of candles) {
  const [x, high, top, bottom, low, kind] = row.split(" ");
  const colour = palette[kind[1]];
  add(candleLayer, "path", { d: `M${+x + 0.5} ${high}V${+low + 1}`, stroke: colour });
  if (kind[0] === "c") {
    add(candleLayer, "path", { d: `M${+x - 2} ${+top + 0.5}h5`, stroke: colour });
  } else {
    add(candleLayer, "rect", {
      x: +x - 1.5, y: +top + 0.5, width: 4, height: Math.max(2, bottom - top - 1),
      fill: kind[0] === "f" ? colour : "#fff", stroke: colour
    });
  }
}

// Price profile, left end and row, in thirds of a pixel from (610, 80).
const bars = `597 66|615 75|757 84|820 92|828 99|855 104|915 110|880 117|609 123|641 130|621 135|693 144|790 153|657 162|738 169|591 174|717 183|805 190|780 201|830 207|828 213|873 219|792 228|723 237|765 243|820 249|792 252|822 258|765 264|790 270|740 274|591 279|492 286|478 291|528 300|702 303|855 310|804 318|693 325|456 330|885 336|915 342|579 348|615 352|852 360|816 368|804 376|780 384|753 391|552 395|444 399|519 408|519 411|657 420|723 426|840 430|925 435|852 441|627 447|852 456|900 460|789 465|705 472|570 477|804 485|711 495|870 503|849 510|870 517|798 524|639 531|900 540|810 546|726 553|420 563|553 569|594 571|624 580|393 585|735 594|840 602|792 609|872 616|699 624|540 632|810 641|792 648|822 654|759 662|606 666|820 672|639 678|660 684|477 687|690 692|729 702|768 708|800 715|830 720|700 735|640 750|780 762|690 775|600 790|760 805|700 820|810 835|650 850|740 865|790 880|700 895`
  .split("|").map(item => item.split(" ").map(Number));
const barLayer = document.getElementById("profile-bars");
bars.forEach(([left, row], i) => {
  const x = Math.round(610 + left / 3);
  const y = Math.round(79 + row / 3);
  add(barLayer, "rect", { x, y, width: 925 - x, height: 2 });
  const next = bars[i + 1];
  if (next) {
    const nx = Math.round(610 + next[0] / 3);
    const ny = Math.round(79 + next[1] / 3);
    const gap = Math.min(916, Math.max(x, nx) + 4);
    if (ny > y + 2) add(barLayer, "rect", { x: gap, y: y + 2, width: 925 - gap, height: ny - y - 2 });
  }
});
```
